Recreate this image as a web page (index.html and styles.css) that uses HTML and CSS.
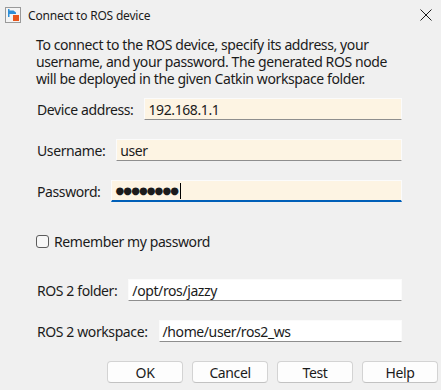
FILE: index.html
```html
<!DOCTYPE html>
<html lang="en">
<head>
    <meta charset="UTF-8">
    <meta name="viewport" content="width=device-width, initial-scale=1.0">
    <title>Connect to ROS device</title>
    <link rel="stylesheet" href="styles.css">
</head>
<body>

    <!-- Window title bar -->
    <div class="titlebar">
        <svg class="app-icon" width="16" height="16" viewBox="0 0 16 16">
            <rect x="0.5" y="0.5" width="15" height="15" fill="#f4f4f4" stroke="#9a9a9a"/>
            <path d="M3 2 L3 10 L4.5 10 L4.5 7 L11 7 L11 5.5 L8.5 3.5 L4.5 3.5 L4.5 2 Z" fill="#2e8fd8"/>
            <rect x="8" y="8" width="6" height="6" fill="#e8571e"/>
        </svg>
        <span class="title">Connect to ROS device</span>
        <svg class="close" width="12" height="12" viewBox="0 0 12 12">
            <path d="M0.5 0.5 L11.5 11.5 M11.5 0.5 L0.5 11.5" stroke="#1b1b1b" stroke-width="1"/>
        </svg>
    </div>

    <div class="content">
        <p class="intro">To connect to the ROS device, specify its address, your username, and your password. The generated ROS node will be deployed in the given Catkin workspace folder.</p>

        <div class="row">
            <label>Device address:</label>
            <div class="field">192.168.1.1</div>
        </div>

        <div class="row">
            <label>Username:</label>
            <div class="field">user</div>
        </div>

        <div class="row">
            <label>Password:</label>
            <div class="field focused">
                <span class="dots">●●●●●●●●</span><span class="caret"></span>
            </div>
        </div>

        <div class="check">
            <span class="box"></span>
            <span>Remember my password</span>
        </div>

        <div class="row">
            <label>ROS 2 folder:</label>
            <div class="field plain">/opt/ros/jazzy</div>
        </div>

        <div class="row">
            <label>ROS 2 workspace:</label>
            <div class="field plain">/home/user/ros2_ws</div>
        </div>
    </div>

    <!-- Dialog buttons -->
    <div class="footer">
        <button>OK</button>
        <button>Cancel</button>
        <button>Test</button>
        <button>Help</button>
    </div>

</body>
</html>
```

FILE: styles.css
```css
/* Global Styles */
body {
    margin: 0;
    background-color: #f0f0f0;
    color: #1b1b1b;
    font-family: 'Noto Sans', sans-serif;
    font-size: 14px;
    letter-spacing: -0.4px;
}

/* Title bar */
.titlebar {
    height: 30px;
    display: flex;
    align-items: center;
    padding: 0 9px 0 5px;
}

.app-icon {
    margin-right: 7px;
}

.title {
    font-size: 12px;
    letter-spacing: -0.2px;
    flex: 1;
}

/* Dialog body */
.content {
    padding: 0 39px 0 36px;
}

.intro {
    margin: 6px 0 11px;
    line-height: 17px;
}

.row {
    display: flex;
    align-items: center;
    gap: 11px;
    margin-bottom: 19px;
}

.row label {
    padding-left: 1px;
    white-space: nowrap;
}

.field {
    flex: 1;
    height: 22px;
    box-sizing: border-box;
    padding: 0 3px;
    display: flex;
    align-items: center;
    background-color: #fdf4e3;
    border: 1px solid #fbfbfb;
    border-bottom-color: #8e8e8e;
}

.field.plain {
    background-color: #ffffff;
}

.field.focused {
    border-bottom: 2px solid #005fb8;
}

.dots {
    font-family: 'DejaVu Sans', sans-serif;
    font-size: 10px;
    letter-spacing: -0.9px;
}

.caret {
    width: 1px;
    height: 16px;
    margin-left: 2px;
    background-color: #000;
}

/* Checkbox */
.check {
    display: flex;
    align-items: center;
    gap: 5px;
    margin: 30px 0 28px;
}

.box {
    width: 11px;
    height: 11px;
    border: 1px solid #5c5c5c;
    border-radius: 3px;
    background-color: #f7f7f7;
}

/* Buttons */
.footer {
    display: flex;
    justify-content: flex-end;
    gap: 9px;
    padding-right: 3px;
    margin-top: 1px;
}

button {
    width: 76px;
    height: 22px;
    font-family: inherit;
    font-size: 14px;
    letter-spacing: -0.4px;
    color: #1b1b1b;
    background-color: #fdfdfd;
    border: 1px solid #d3d3d3;
    border-bottom-color: #c2c2c2;
    border-radius: 4px;
    padding: 0;
}
```
